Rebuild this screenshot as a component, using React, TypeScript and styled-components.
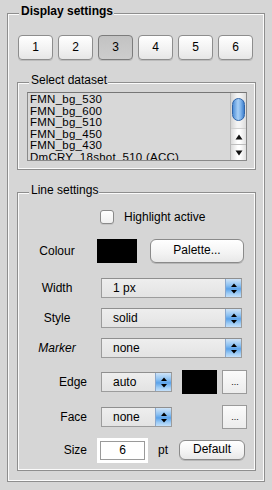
import React from 'react';
import styled, { createGlobalStyle } from 'styled-components';

const GlobalStyle = createGlobalStyle`
  html, body { margin: 0; padding: 0; }
  body {
    background: #d6d6d6;
    font-family: "Liberation Sans", Arial, Helvetica, sans-serif;
    font-size: 12px;
    color: #000;
  }
  * { box-sizing: border-box; }
`;

const Page = styled.div`
  width: 272px;
  height: 490px;
  padding: 4px 0 0 7px;
  overflow: hidden;
`;

const Group = styled.fieldset<{ $width: number }>`
  width: ${(p) => p.$width}px;
  margin: 0;
  padding: 0;
  min-width: 0;
  border: 1px solid #8e8e8e;
  box-shadow: inset 0 0 0 1px #fbfbfb;
`;

const Legend = styled.legend<{ $bold?: boolean }>`
  margin-left: 11px;
  padding: 0 1px 4px 2px;
  line-height: 15px;
  font-size: 12px;
  font-weight: ${(p) => (p.$bold ? 700 : 400)};
  background: #d6d6d6;
`;

const OuterBody = styled.div`
  display: flex;
  flex-direction: column;
  padding: 12px 8px 10px 9px;
`;

const NumRow = styled.div`
  display: flex;
  gap: 5px;
  margin: 0 0 13px 1px;
`;

const NumButton = styled.button<{ $active?: boolean }>`
  width: 35px;
  height: 25px;
  padding: 0 0 2px;
  border: 1px solid ${(p) => (p.$active ? '#7c7c7c' : '#8d8d8d')};
  border-radius: 4px;
  background: ${(p) =>
    p.$active
      ? 'linear-gradient(#c2c2c2, #cdcdcd)'
      : 'linear-gradient(#ffffff, #f1f1f1 60%, #e6e6e6)'};
  box-shadow: 0 1px 0 rgba(0, 0, 0, 0.12);
  font-family: inherit;
  font-size: 12px;
  color: #000;
`;

const SpacedGroup = styled(Group)`
  margin-top: 13px;
`;

const ListBox = styled.div`
  display: flex;
  width: 220px;
  height: 69px;
  margin: 0 8px 8px 9px;
  border: 1px solid #8a8a8a;
  border-top-color: #767676;
  background: #d8d8d8;
  overflow: hidden;
`;

const ListItems = styled.div`
  flex: 1;
  padding: 1px 0 0 2px;
  overflow: hidden;
`;

const ListItem = styled.div`
  height: 11.5px;
  font-size: 11.5px;
  line-height: 11.5px;
  letter-spacing: 0.25px;
  white-space: nowrap;
`;

const ScrollBar = styled.div`
  width: 16px;
  display: flex;
  flex-direction: column;
  border-left: 1px solid #b8b8b8;
  background: linear-gradient(90deg, #d4d4d4, #f4f4f4 40%, #f4f4f4 60%, #dcdcdc);
`;

const Track = styled.div`
  flex: 1;
  padding: 5px 1px 0 1px;
`;

const Thumb = styled.div`
  height: 23px;
  border-radius: 7px;
  border: 1px solid #2f64a8;
  background: linear-gradient(90deg, #4f8fd8, #a9d0f6 45%, #7fb4ec 70%, #3f7fcc);
`;

const ScrollBtn = styled.div<{ $top?: boolean }>`
  height: 16px;
  display: flex;
  align-items: center;
  justify-content: center;
  border-top: 1px solid ${(p) => (p.$top ? '#d0d0d0' : '#bdbdbd')};
  background: linear-gradient(90deg, #dcdcdc, #ffffff 45%, #ffffff 60%, #e0e0e0);
`;

const Settings = styled.div`
  display: flex;
  flex-direction: column;
  padding: 8px 0 8px 0;
`;

const Row = styled.div<{ $mt: number; $h: number }>`
  display: flex;
  align-items: center;
  height: ${(p) => p.$h}px;
  margin-top: ${(p) => p.$mt}px;
  padding-left: 9px;
`;

const Label = styled.span<{ $align?: 'center' | 'right'; $italic?: boolean }>`
  flex: none;
  width: 60px;
  margin-right: 10px;
  text-align: ${(p) => p.$align ?? 'center'};
  font-style: ${(p) => (p.$italic ? 'italic' : 'normal')};
  font-size: 12px;
`;

const CheckBox = styled.span`
  flex: none;
  width: 14px;
  height: 14px;
  margin-left: 3px;
  border: 1px solid #8a8a8a;
  border-radius: 3px;
  background: linear-gradient(#ffffff, #f0f0f0);
  box-shadow: 0 1px 0 rgba(0, 0, 0, 0.08);
`;

const CheckText = styled.span`
  margin-left: 10px;
`;

const Swatch = styled.span<{ $w: number; $ml: number }>`
  flex: none;
  width: ${(p) => p.$w}px;
  height: 24px;
  margin-left: ${(p) => p.$ml}px;
  background: #000;
`;

const PushButton = styled.button<{ $w: number; $h: number; $ml: number }>`
  flex: none;
  width: ${(p) => p.$w}px;
  height: ${(p) => p.$h}px;
  margin-left: ${(p) => p.$ml}px;
  padding: 0 0 2px;
  border: 1px solid #8a8a8a;
  border-radius: 6px;
  background: linear-gradient(#ffffff, #f3f3f3 60%, #e8e8e8);
  box-shadow: 0 1px 0 rgba(0, 0, 0, 0.15);
  font-family: inherit;
  font-size: 12px;
  color: #000;
`;

const DotsButton = styled.button<{ $ml: number }>`
  flex: none;
  width: 25px;
  height: 24px;
  margin-left: ${(p) => p.$ml}px;
  padding: 0 0 0 1px;
  border: 1px solid #9a9a9a;
  border-radius: 0;
  background: linear-gradient(#fbfbfb, #ececec);
  font-family: inherit;
  font-size: 9px;
  line-height: 22px;
  color: #000;
`;

const SelectBox = styled.div<{ $w: number }>`
  flex: none;
  display: flex;
  width: ${(p) => p.$w}px;
  height: 20px;
  margin-left: 4px;
  border: 1px solid #9c9c9c;
  border-top-color: #8f8f8f;
  background: linear-gradient(#eeeeee, #e3e3e3);
`;

const SelectText = styled.span`
  flex: 1;
  padding-left: 11px;
  line-height: 18px;
  font-size: 12px;
`;

const SelectArrows = styled.span`
  flex: none;
  width: 16px;
  display: flex;
  align-items: center;
  justify-content: center;
  border-left: 1px solid #8aa7cc;
  background: linear-gradient(#cfe4f8, #8ec2f2 35%, #5aa2ea 55%, #9ccbf5 80%, #c4e0fa);
`;

const SizeInput = styled.span`
  flex: none;
  width: 45px;
  height: 19px;
  margin-left: 3px;
  border: 1px solid #9a9a9a;
  background: #fff;
  box-shadow: 0 0 0 3px #ffffff;
  text-align: center;
  line-height: 17px;
  font-size: 12px;
`;

const Unit = styled.span`
  margin-left: 13px;
`;

const UpDown = () => (
  <svg width="8" height="11" viewBox="0 0 8 11">
    <path d="M4 0.5 L7 4 L1 4 Z" fill="#000" />
    <path d="M4 10.5 L7 7 L1 7 Z" fill="#000" />
  </svg>
);

const Tri = ({ up }: { up?: boolean }) => (
  <svg width="8" height="6" viewBox="0 0 8 6">
    {up ? <path d="M4 0.5 L7.5 5.5 L0.5 5.5 Z" fill="#111" /> : <path d="M4 5.5 L7.5 0.5 L0.5 0.5 Z" fill="#111" />}
  </svg>
);

const Select = ({ w, value }: { w: number; value: string }) => (
  <SelectBox $w={w}>
    <SelectText>{value}</SelectText>
    <SelectArrows>
      <UpDown />
    </SelectArrows>
  </SelectBox>
);

const datasets = [
  'FMN_bg_530',
  'FMN_bg_600',
  'FMN_bg_510',
  'FMN_bg_450',
  'FMN_bg_430',
  'DmCRY_18shot_510 (ACC)',
];

export default function App() {
  return (
    <>
      <GlobalStyle />
      <Page>
        <Group $width={258}>
          <Legend $bold>Display settings</Legend>
          <OuterBody>
            <NumRow>
              {[1, 2, 3, 4, 5, 6].map((n) => (
                <NumButton key={n} $active={n === 3}>
                  {n}
                </NumButton>
              ))}
            </NumRow>

            <Group $width={239}>
              <Legend>Select dataset</Legend>
              <ListBox>
                <ListItems>
                  {datasets.map((d) => (
                    <ListItem key={d}>{d}</ListItem>
                  ))}
                </ListItems>
                <ScrollBar>
                  <Track>
                    <Thumb />
                  </Track>
                  <ScrollBtn $top>
                    <Tri up />
                  </ScrollBtn>
                  <ScrollBtn>
                    <Tri />
                  </ScrollBtn>
                </ScrollBar>
              </ListBox>
            </Group>

            <SpacedGroup $width={239}>
              <Legend>Line settings</Legend>
              <Settings>
                <Row $mt={0} $h={14}>
                  <Label />
                  <CheckBox />
                  <CheckText>Highlight active</CheckText>
                </Row>
                <Row $mt={15} $h={24}>
                  <Label>Colour</Label>
                  <Swatch $w={40} $ml={0} />
                  <PushButton $w={94} $h={24} $ml={13}>
                    Palette...
                  </PushButton>
                </Row>
                <Row $mt={15} $h={20}>
                  <Label>Width</Label>
                  <Select w={141} value="1 px" />
                </Row>
                <Row $mt={10} $h={20}>
                  <Label>Style</Label>
                  <Select w={141} value="solid" />
                </Row>
                <Row $mt={10} $h={20}>
                  <Label $italic>Marker</Label>
                  <Select w={141} value="none" />
                </Row>
                <Row $mt={12} $h={24}>
                  <Label $align="right">Edge</Label>
                  <Select w={71} value="auto" />
                  <Swatch $w={35} $ml={10} />
                  <DotsButton $ml={5}>...</DotsButton>
                </Row>
                <Row $mt={11} $h={24}>
                  <Label $align="right">Face</Label>
                  <Select w={71} value="none" />
                  <DotsButton $ml={50}>...</DotsButton>
                </Row>
                <Row $mt={9} $h={24}>
                  <Label $align="right">Size</Label>
                  <SizeInput>6</SizeInput>
                  <Unit>pt</Unit>
                  <PushButton $w={66} $h={20} $ml={11}>
                    Default
                  </PushButton>
                </Row>
              </Settings>
            </SpacedGroup>
          </OuterBody>
        </Group>
      </Page>
    </>
  );
}
